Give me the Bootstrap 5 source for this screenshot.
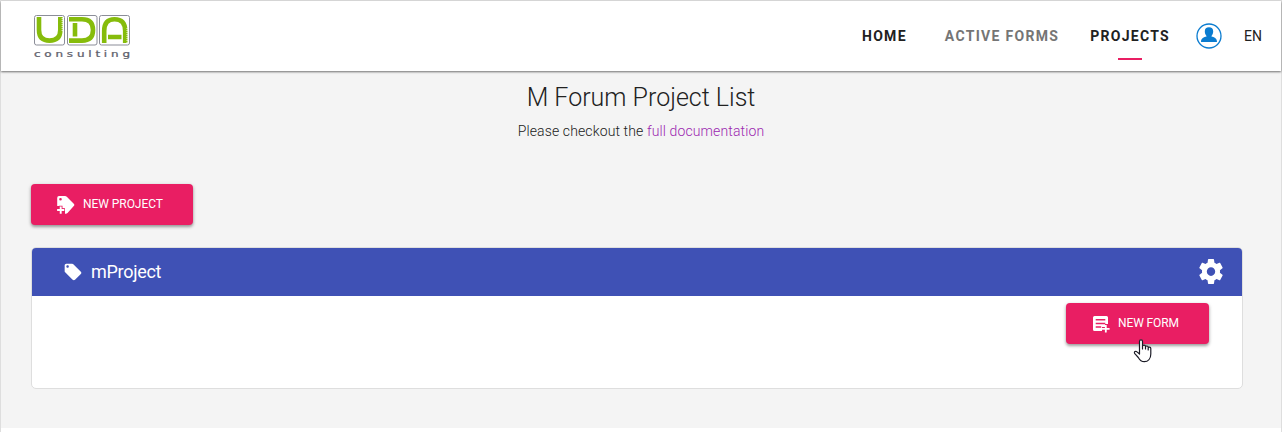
<!DOCTYPE html>
<html lang="en">
<head>
<meta charset="utf-8">
<meta name="viewport" content="width=device-width, initial-scale=1">
<title>M Forum Project List</title>
<link href="https://cdn.jsdelivr.net/npm/bootstrap@5.3.0/dist/css/bootstrap.min.css" rel="stylesheet">
<style>
body{font-family:Roboto,"Liberation Sans",sans-serif;background:#fff;color:#212121;overflow:hidden}
.app{height:432px;border:1px solid #dedede;border-bottom:0}
.topbar{height:70px;padding:0 19px 0 32px;box-shadow:0 1px 2px rgba(0,0,0,.55);position:relative;background:#fff}
.brand-logo{display:block;margin-top:2px}
.menu-link{font-size:14px;font-weight:700;letter-spacing:1.3px;line-height:20px;color:#212121;text-decoration:none;position:relative}
.menu-link.muted{color:#757575;margin-left:38px}
.menu-link.current{margin-left:31px}
.menu-link.current::after{content:"";position:absolute;left:28px;top:32px;width:24px;height:2px;background:#e91e63}
.avatar{margin-left:26px}
.lang{font-size:14px;line-height:20px;margin-left:22px}
.page{height:357px;background:#f4f4f4;padding:0 38px 0 30px}
.page-title{font-size:25px;font-weight:300;line-height:30px;padding-top:12px;margin:0 -8px 0 0}
.page-sub{font-size:14px;font-weight:300;letter-spacing:.12px;line-height:20px;margin:8px -8px 43px 0}
.page-sub a{color:#9c27b0;text-decoration:none}
.btn-pink{--bs-btn-bg:#e91e63;--bs-btn-color:#fff;--bs-btn-hover-bg:#e91e63;--bs-btn-hover-color:#fff;height:41px;border:0;border-radius:4px;padding:0 0 0 25px;font-size:12px;line-height:18px;letter-spacing:-.05px;box-shadow:0 2px 3px rgba(0,0,0,.3),0 1px 4px rgba(0,0,0,.15)}
.btn-pink span{margin:-2px 0 0 7px}
.btn-project{width:162px}
.btn-form{width:143px;letter-spacing:-.12px}
.project{margin-top:22px;height:142px;border:1px solid #dedede;border-radius:5px}
.project .card-header{height:48px;background:#3f51b5;color:#fff;padding:0 19px 0 31px;border:0;border-radius:4px 4px 0 0;font-size:18px;letter-spacing:-.3px}
.project-name{margin:-2px 0 0 8px}
.gear{margin-top:-1px}
.project .card-body{padding:7px 33px 0}
.hand{position:absolute;left:67px;top:34px}
</style>
</head>
<body>
<div class="app">
<nav class="topbar d-flex align-items-center">
  <a href="#" class="me-auto"><svg class="brand-logo" width="98" height="48" viewBox="33 13 98 48">
    <g fill="#fff" stroke="#8b8d98" stroke-width="1"><rect x="34.5" y="15.5" width="30" height="29.5" rx="2"/><rect x="67.5" y="15.5" width="29.500" height="29.500" rx="2"/><rect x="99.500" y="15.500" width="30" height="29.500" rx="2"/></g>
    <g fill="none" stroke="#86bc0b" stroke-width="4.600">
      <path d="M39 17V30Q39 40.600 49.500 40.600Q60.300 40.600 60.300 30V17"/>
      <path d="M69 19.300H82Q93 19.300 93 30Q93 40.600 82 40.600H69M75 23V36.500"/>
      <path d="M104.200 43V31Q104.200 19.300 114.500 19.300Q125.200 19.300 125.200 31V43M108 37H121.500"/>
    </g>
    <path d="M62.200 18V31M127.100 28V43" stroke="#fff" stroke-width="1" stroke-dasharray="1 1"/>
    <text transform="translate(34 56.500) scale(1.500 1)" font-family="DejaVu Sans, sans-serif" font-size="8" fill="#5f626d" stroke="#5f626d" stroke-width=".25" textLength="64">consulting</text>
  </svg></a>
  <a href="#" class="menu-link">HOME</a>
  <a href="#" class="menu-link muted">ACTIVE FORMS</a>
  <a href="#" class="menu-link current">PROJECTS</a>
  <svg class="avatar" width="26" height="26" viewBox="0 0 26 26"><circle cx="13" cy="13" r="12" fill="none" stroke="#0b7cd0" stroke-width="1.300"/><path d="M13 4.300c2.700 0 4.200 1.500 4.200 4 0 2-.8 3.800-1.700 4.700v.5c2.500.8 5.500 1.400 5.500 5.500H5c0-4.100 3-4.700 5.500-5.500V13c-.9-.9-1.700-2.700-1.700-4.700 0-2.500 1.500-4 4.200-4z" fill="#0b7cd0"/></svg>
  <span class="lang">EN</span>
</nav>
<main class="page">
  <h1 class="page-title text-center">M Forum Project List</h1>
  <p class="page-sub text-center">Please checkout the <a href="#">full documentation</a></p>
  <button class="btn btn-pink btn-project d-inline-flex align-items-center">
    <svg width="20" height="20" viewBox="0 0 20 20"><path fill="#fff" fill-rule="evenodd" d="M3 1h6q1 0 1.800.8L18 9q.8.900 0 1.800L11.500 18q-.7.700-1.800.7H9v-5.200H6V11H1.200V3Q1.200 1 3 1zm1.500 1.900a1.300 1.300 0 1 0 0 2.600 1.300 1.300 0 0 0 0-2.600z"/><path d="M4.700 10.800v8.600M0 15h8.800" stroke="#e91e63" stroke-width="3.600"/><path d="M4.700 11.500v7.200M1.100 15h7.200" stroke="#fff" stroke-width="1.900"/></svg>
    <span>NEW PROJECT</span>
  </button>
  <section class="card project">
    <div class="card-header d-flex align-items-center">
      <svg width="20" height="20" viewBox="0 0 24 24"><path fill="#fff" d="m21.410 11.580-9-9C12.050 2.220 11.550 2 11 2H4c-1.100 0-2 .9-2 2v7c0 .550.220 1.050.590 1.420l9 9c.360.360.860.580 1.410.580s1.050-.220 1.410-.590l7-7c.370-.360.590-.860.590-1.410s-.230-1.060-.590-1.420zM5.500 7C4.670 7 4 6.330 4 5.500S4.670 4 5.500 4 7 4.670 7 5.500 6.330 7 5.500 7z"/></svg>
      <span class="project-name me-auto">mProject</span>
      <svg class="gear" width="24" height="25" viewBox="2 2 20 20" preserveAspectRatio="none"><path fill="#fff" d="M19.430 12.980c.04-.32.070-.640.070-.980s-.030-.660-.070-.980l2.110-1.650c.190-.150.240-.420.120-.640l-2-3.460c-.120-.220-.390-.300-.610-.220l-2.490 1c-.520-.400-1.080-.730-1.690-.980l-.380-2.650C14.460 2.180 14.250 2 14 2h-4c-.250 0-.460.180-.490.420l-.380 2.650c-.610.250-1.170.590-1.690.980l-2.490-1c-.230-.090-.490 0-.610.220l-2 3.460c-.130.220-.070.490.120.640l2.110 1.650c-.040.320-.070.650-.070.980s.030.660.070.980l-2.110 1.650c-.190.150-.240.420-.120.640l2 3.460c.120.220.390.300.610.220l2.490-1c.520.400 1.080.730 1.690.980l.380 2.650c.030.240.240.420.490.420h4c.250 0 .460-.180.490-.420l.380-2.650c.610-.250 1.170-.590 1.690-.980l2.490 1c.230.090.490 0 .610-.220l2-3.460c.120-.220.070-.490-.120-.640zM12 15.500a3.500 3.500 0 1 1 0-7 3.500 3.500 0 0 1 0 7z"/></svg>
    </div>
    <div class="card-body d-flex justify-content-end align-items-start">
      <button class="btn btn-pink btn-form d-inline-flex align-items-center position-relative">
        <svg width="20" height="20" viewBox="0 0 20 20"><path fill="#fff" d="M3.500 2h12q1.500 0 1.500 1.500V10h-3v3h-3v4H3.500Q2 17 2 15.500v-12Q2 2 3.500 2z"/><path d="M4.700 5.800h9.600M4.700 9.400h9.600M4.700 13h5.500" stroke="#e91e63" stroke-width="1.500"/><path d="M14.800 11v7.600M11 14.800h7.600" stroke="#fff" stroke-width="1.800"/></svg>
        <span>NEW FORM</span>
        <svg class="hand" width="20" height="26" viewBox="0 0 20 26"><path d="M6.500 17V4.500C6.500 2.300 9.500 2.300 9.500 4.500V12V9.500c0-1.800 3-1.800 3 0V12v-1.700c0-1.800 2.700-1.600 2.700 0V13v-1.800c0-1.700 2.600-1.500 2.600.3V17c0 5-2.800 7.700-6.500 7.700-3 0-4.500-1.500-6-4.200L1.800 16.700c-1.300-2 1-3 2.200-1.800z" fill="#fff" stroke="#1b1b26" stroke-width="1.200" stroke-linejoin="round"/></svg>
      </button>
    </div>
  </section>
</main>
</div>
<script src="https://cdn.jsdelivr.net/npm/bootstrap@5.3.0/dist/js/bootstrap.bundle.min.js"></script>
</body>
</html>
